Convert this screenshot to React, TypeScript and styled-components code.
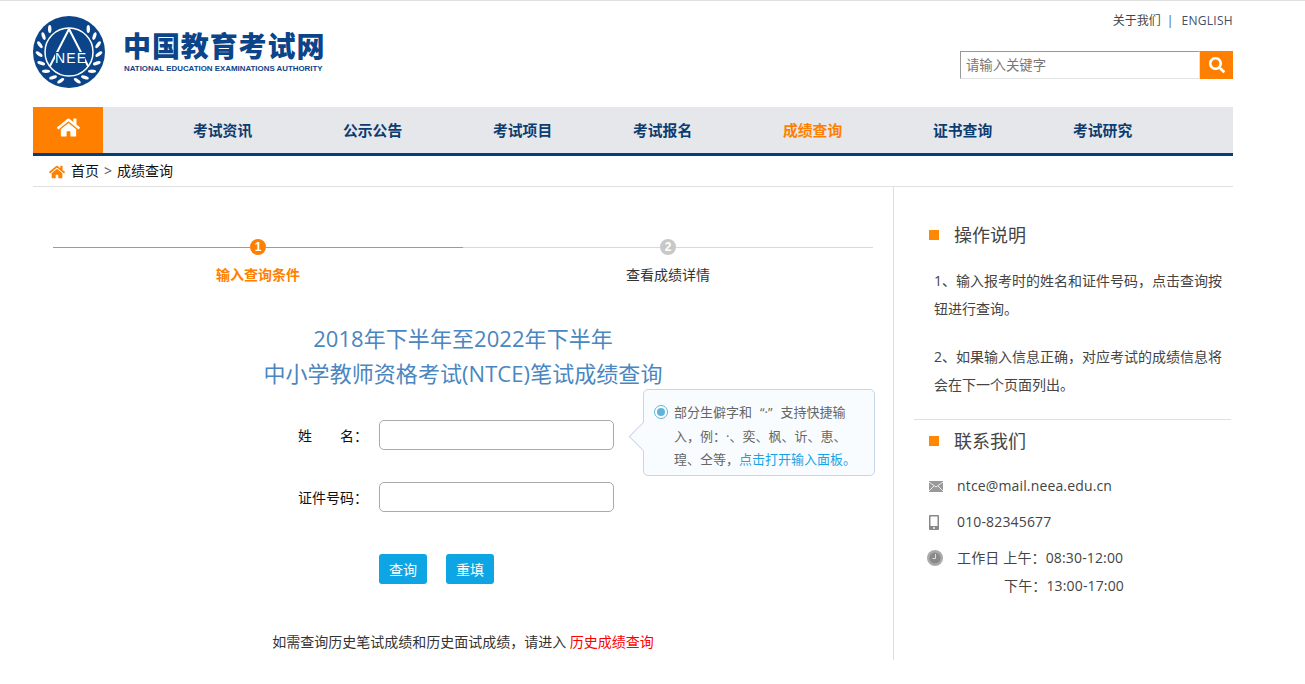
import React from 'react';
import styled, { createGlobalStyle } from 'styled-components';
import { FaHome, FaSearch } from 'react-icons/fa';

const GlobalStyle = createGlobalStyle`
  html, body {
    margin: 0;
    padding: 0;
    background: #fff;
    font-family: "Open Sans", "Noto Sans CJK SC", sans-serif;
    color: #333;
    text-spacing-trim: space-all;
  }
`;

const TopLine = styled.div`
  height: 1px;
  background: #e0e0e0;
`;

const Wrapper = styled.div`
  width: 1200px;
  margin-left: 33px;
`;

const Header = styled.header`
  height: 106px;
  display: flex;
  justify-content: space-between;
`;

const Brand = styled.div`
  display: flex;
  gap: 18px;
  padding-top: 15px;
  align-items: flex-start;
`;

const BrandText = styled.div`
  display: flex;
  flex-direction: column;
  padding-top: 12px;
`;

const BrandName = styled.div`
  font-family: "Noto Sans CJK SC", sans-serif;
  font-size: 28px;
  line-height: 34px;
  font-weight: 900;
  letter-spacing: 0.9px;
  color: #0b4488;
`;

const BrandSub = styled.div`
  font-family: "Liberation Sans", sans-serif;
  font-size: 7.9px;
  line-height: 10px;
  margin-top: 2px;
  margin-left: 1px;
  font-weight: 700;
  color: #0b4488;
  white-space: nowrap;
`;

const HeaderRight = styled.div`
  display: flex;
  flex-direction: column;
  align-items: flex-end;
`;

const TopLinks = styled.div`
  margin-top: 10px;
  height: 20px;
  font-size: 12px;
  line-height: 20px;
  color: #444;
  display: flex;
  gap: 6px;
`;

const LinkSep = styled.span`
  margin-right: 2px;
  color: #3a5a80;
`;

const English = styled.span`
  color: #3e4f6b;
  letter-spacing: 0.3px;
`;

const SearchBox = styled.div`
  margin-top: 20px;
  width: 273px;
  height: 28px;
  display: flex;
`;

const SearchInput = styled.input`
  flex: 1;
  min-width: 0;
  box-sizing: border-box;
  height: 28px;
  padding: 0 5px;
  border: 1px solid #e2e2e2;
  border-top-color: #999;
  border-left-color: #999;
  font-family: inherit;
  font-size: 13.33px;
  outline: none;

  &::placeholder {
    color: #777;
    opacity: 1;
  }
`;

const SearchButton = styled.button`
  width: 33px;
  height: 28px;
  border: 0;
  padding: 0;
  background: #ff8000;
  color: #fff;
  display: flex;
  align-items: center;
  justify-content: center;
`;

const Nav = styled.nav`
  height: 46px;
  display: flex;
  background: #e6e7eb;
  border-bottom: 3px solid #033f7c;
`;

const NavHome = styled.div`
  width: 70px;
  background: #ff8000;
  color: #fff;
  display: flex;
  align-items: center;
  justify-content: center;
  padding-bottom: 5px;
  box-sizing: border-box;
`;

const NavList = styled.div`
  display: flex;
  padding-left: 90px;
`;

const NavItem = styled.a<{ $width: number; $active?: boolean }>`
  width: ${p => p.$width}px;
  font-family: "Noto Sans CJK SC", sans-serif;
  font-size: 14.8px;
  font-weight: 700;
  line-height: 45px;
  color: ${p => (p.$active ? '#ff8000' : '#0c3c70')};
`;

const Crumbs = styled.div`
  height: 28px;
  box-sizing: content-box;
  border-bottom: 1px solid #e0e0e0;
  padding: 0 0 2px 16px;
  display: flex;
  align-items: center;
  gap: 6px;
  font-size: 14px;
  color: #111;
`;

const CrumbIcon = styled.span`
  display: flex;
  color: #ff8000;
  margin-top: 3px;
`;

const CrumbArrow = styled.span`
  color: #555;
  margin: 0 -1px;
`;

const Main = styled.main`
  display: flex;
`;

const Left = styled.section`
  width: 860px;
  height: 421px;
  box-sizing: content-box;
  border-right: 1px solid #ddd;
  padding-top: 52px;
  display: flex;
  flex-direction: column;
  align-items: center;
`;

const Stepper = styled.div`
  width: 820px;
  display: flex;
`;

const Step = styled.div`
  width: 410px;
  display: flex;
  flex-direction: column;
  align-items: center;
`;

const Track = styled.div`
  width: 100%;
  display: flex;
  align-items: center;
`;

const TrackLine = styled.div<{ $on?: boolean }>`
  flex: 1;
  height: 1px;
  background: ${p => (p.$on ? '#f5861f' : '#d9d9d9')};
`;

const Dot = styled.div<{ $on?: boolean }>`
  width: 16px;
  height: 16px;
  border-radius: 50%;
  background: ${p => (p.$on ? '#ff8000' : '#c8c8c8')};
  color: #fff;
  font-family: "Liberation Sans", sans-serif;
  font-size: 12px;
  font-weight: 700;
  line-height: 16px;
  text-align: center;
`;

const StepLabel = styled.div<{ $on?: boolean }>`
  margin-top: 10px;
  font-size: 14px;
  line-height: 20px;
  font-weight: ${p => (p.$on ? 700 : 400)};
  color: ${p => (p.$on ? '#ff8000' : '#333')};
`;

const Title = styled.h1`
  margin: 36px 0 0;
  font-size: 22px;
  line-height: 35px;
  font-weight: 400;
  letter-spacing: 0.06px;
  text-align: center;
  color: #4a86c0;
`;

const FormArea = styled.div`
  position: relative;
  width: 820px;
  margin-top: 29px;
  padding-left: 245px;
  box-sizing: border-box;
`;

const Row = styled.div`
  display: flex;
  align-items: center;
  height: 30px;
  margin-bottom: 32px;
`;

const Label = styled.label`
  width: 81px;
  font-size: 14px;
  color: #111;
  white-space: pre;
`;

const Field = styled.input`
  width: 235px;
  height: 30px;
  box-sizing: border-box;
  border: 1px solid #aaa;
  border-radius: 5px;
  outline: none;
`;

const Actions = styled.div`
  display: flex;
  gap: 19px;
  margin: 42px 0 0 81px;
`;

const Btn = styled.button`
  width: 48px;
  height: 30px;
  border: 0;
  padding: 0;
  border-radius: 3px;
  background: #0ea5e4;
  color: #fff;
  font-family: inherit;
  font-size: 14px;
`;

const Tip = styled.div`
  position: absolute;
  left: 590px;
  top: -31px;
  width: 232px;
  height: 87px;
  box-sizing: border-box;
  padding: 11px 10px 0 30px;
  background: #f9fcff;
  border: 1px solid #c5d6ea;
  border-radius: 5px;
  font-size: 13px;
  line-height: 23.5px;
  color: #666;
  white-space: nowrap;

  &::before {
    content: '';
    position: absolute;
    left: -11px;
    top: 36px;
    width: 20px;
    height: 20px;
    background: #f9fcff;
    border-left: 1px solid #c5d6ea;
    border-bottom: 1px solid #c5d6ea;
    transform: rotate(45deg);
  }
`;

const TipQuote = styled.span`
  margin: 0 8px;
`;

const TipRadio = styled.span`
  position: absolute;
  left: 10px;
  top: 15px;
  width: 14px;
  height: 14px;
  box-sizing: border-box;
  border: 1px solid #5fb5d8;
  border-radius: 50%;
  background: #fff;

  &::after {
    content: '';
    position: absolute;
    left: 2px;
    top: 2px;
    width: 8px;
    height: 8px;
    border-radius: 50%;
    background: #5fb5d8;
  }
`;

const TipLine = styled.span`
  position: relative;
`;

const TipLink = styled.a`
  color: #17a4e6;
`;

const Note = styled.p`
  margin: 46px 0 0;
  font-size: 14px;
  line-height: 24px;
  color: #333;
  text-align: center;
`;

const NoteLink = styled.a`
  color: #f00;
`;

const Right = styled.aside`
  flex: 1;
  padding: 34px 2px 0 20px;
`;

const SideHead = styled.h2`
  margin: 0;
  display: flex;
  align-items: center;
  gap: 15px;
  padding-left: 15px;
  font-size: 18px;
  line-height: 28px;
  font-weight: 400;
  color: #444;
`;

const Square = styled.i`
  width: 10px;
  height: 10px;
  background: #ff8800;
  margin-top: -1px;
`;

const SideText = styled.p`
  margin: 0;
  padding-left: 20px;
  width: 292px;
  font-size: 14px;
  line-height: 28px;
  color: #444;
`;

const Steps = styled.div`
  display: flex;
  flex-direction: column;
  gap: 20px;
  margin-top: 18px;
`;

const Divider = styled.div`
  height: 1px;
  background: #e0e0e0;
  margin: 20px 0 7px;
`;

const Contacts = styled.div`
  display: flex;
  flex-direction: column;
  gap: 8px;
  margin-top: 17px;
  padding-left: 15px;
`;

const Contact = styled.div`
  display: flex;
  align-items: flex-start;
  font-size: 14px;
  line-height: 28px;
  letter-spacing: 0.15px;
  color: #444;
`;

const ContactIcon = styled.span`
  width: 28px;
  height: 28px;
  flex: none;
  display: flex;
  align-items: center;
`;

const HoursLine = styled.div<{ $indent?: boolean }>`
  white-space: pre;
  padding-left: ${p => (p.$indent ? '47px' : '0')};
`;

const MailIcon = () => (
  <svg width="14" height="11" viewBox="0 0 14 11">
    <rect width="14" height="11" fill="#999" />
    <path d="M0 1l7 5 7-5M0 10l5-5M14 10L9 5" fill="none" stroke="#fff" strokeWidth="0.8" />
  </svg>
);

const PhoneIcon = () => (
  <svg width="10" height="15" viewBox="0 0 10 15">
    <rect width="10" height="15" rx="1" fill="#888" />
    <rect x="1.5" y="1.5" width="7" height="9.5" fill="#fff" />
    <circle cx="5" cy="13" r="0.9" fill="#fff" />
  </svg>
);

const ClockIcon = () => (
  <svg width="16" height="16" viewBox="0 0 16 16" style={{ marginLeft: -2 }}>
    <circle cx="8" cy="8" r="8" fill="#aaa" />
    <circle cx="8" cy="8" r="5.6" fill="#8a8a8a" />
    <path d="M8.5 4v4.5H5.5" fill="none" stroke="#ddd" strokeWidth="1" />
  </svg>
);

// laurel leaves round the emblem, one side then mirrored
const leafAngles = [40, 58, 76, 94, 112, 130, 148, 164];

const Emblem = () => (
  <svg width="72" height="72" viewBox="0 0 72 72">
    <circle cx="36" cy="36" r="36" fill="#0b4488" />
    {leafAngles.map(a => (
      <g key={a}>
        <ellipse cx="36" cy="6" rx="1.7" ry="4" fill="#fff" transform={`rotate(${a} 36 36) rotate(-40 36 6)`} />
        <ellipse cx="36" cy="6" rx="1.7" ry="4" fill="#fff" transform={`rotate(${-a} 36 36) rotate(40 36 6)`} />
      </g>
    ))}
    <circle cx="36" cy="36" r="24" fill="none" stroke="#fff" strokeWidth="1.5" />
    <path d="M36 13L17 50M36 13l19 37" fill="none" stroke="#fff" strokeWidth="2" />
    <rect x="22" y="36" width="30" height="12" fill="#0b4488" />
    <text x="22" y="47" fontFamily="Liberation Sans, sans-serif" fontSize="14" fill="#fff" textLength="31">NEE</text>
  </svg>
);

const navItems: { label: string; width: number; active?: boolean }[] = [
  { label: '考试资讯', width: 150 },
  { label: '公示公告', width: 150 },
  { label: '考试项目', width: 140 },
  { label: '考试报名', width: 150 },
  { label: '成绩查询', width: 150, active: true },
  { label: '证书查询', width: 140 },
  { label: '考试研究', width: 140 },
];

const App: React.FC = () => {
  return (
    <>
      <GlobalStyle />
      <TopLine />
      <Wrapper>
        <Header>
          <Brand>
            <Emblem />
            <BrandText>
              <BrandName>中国教育考试网</BrandName>
              <BrandSub>NATIONAL EDUCATION EXAMINATIONS AUTHORITY</BrandSub>
            </BrandText>
          </Brand>
          <HeaderRight>
            <TopLinks>
              <span>关于我们</span>
              <LinkSep>|</LinkSep>
              <English>ENGLISH</English>
            </TopLinks>
            <SearchBox>
              <SearchInput placeholder="请输入关键字" />
              <SearchButton>
                <FaSearch size={16} />
              </SearchButton>
            </SearchBox>
          </HeaderRight>
        </Header>

        <Nav>
          <NavHome>
            <FaHome size={23} />
          </NavHome>
          <NavList>
            {navItems.map(item => (
              <NavItem key={item.label} $width={item.width} $active={item.active}>
                {item.label}
              </NavItem>
            ))}
          </NavList>
        </Nav>

        <Crumbs>
          <CrumbIcon>
            <FaHome size={16} />
          </CrumbIcon>
          <span>首页</span>
          <CrumbArrow>&gt;</CrumbArrow>
          <span>成绩查询</span>
        </Crumbs>

        <Main>
          <Left>
            <Stepper>
              <Step>
                <Track>
                  <TrackLine $on />
                  <Dot $on>1</Dot>
                  <TrackLine $on />
                </Track>
                <StepLabel $on>输入查询条件</StepLabel>
              </Step>
              <Step>
                <Track>
                  <TrackLine />
                  <Dot>2</Dot>
                  <TrackLine />
                </Track>
                <StepLabel>查看成绩详情</StepLabel>
              </Step>
            </Stepper>

            <Title>
              2018年下半年至2022年下半年
              <br />
              中小学教师资格考试(NTCE)笔试成绩查询
            </Title>

            <FormArea>
              <Row>
                <Label>姓　　名：</Label>
                <Field />
              </Row>
              <Row>
                <Label>证件号码：</Label>
                <Field />
              </Row>
              <Actions>
                <Btn>查询</Btn>
                <Btn>重填</Btn>
              </Actions>
              <Tip>
                <TipRadio />
                <TipLine>
                  部分生僻字和<TipQuote>“·”</TipQuote>支持快捷输
                  <br />
                  入，例：·、奕、枫、䜣、恵、
                  <br />
                  瑝、仝等，<TipLink>点击打开输入面板。</TipLink>
                </TipLine>
              </Tip>
            </FormArea>

            <Note>
              如需查询历史笔试成绩和历史面试成绩，请进入 <NoteLink>历史成绩查询</NoteLink>
            </Note>
          </Left>

          <Right>
            <SideHead>
              <Square />
              操作说明
            </SideHead>
            <Steps>
              <SideText>1、输入报考时的姓名和证件号码，点击查询按钮进行查询。</SideText>
              <SideText>2、如果输入信息正确，对应考试的成绩信息将会在下一个页面列出。</SideText>
            </Steps>
            <Divider />
            <SideHead>
              <Square />
              联系我们
            </SideHead>
            <Contacts>
              <Contact>
                <ContactIcon>
                  <MailIcon />
                </ContactIcon>
                ntce@mail.neea.edu.cn
              </Contact>
              <Contact>
                <ContactIcon>
                  <PhoneIcon />
                </ContactIcon>
                010-82345677
              </Contact>
              <Contact>
                <ContactIcon>
                  <ClockIcon />
                </ContactIcon>
                <div>
                  <HoursLine>工作日 上午：08:30-12:00</HoursLine>
                  <HoursLine $indent>下午：13:00-17:00</HoursLine>
                </div>
              </Contact>
            </Contacts>
          </Right>
        </Main>
      </Wrapper>
    </>
  );
};

export default App;
